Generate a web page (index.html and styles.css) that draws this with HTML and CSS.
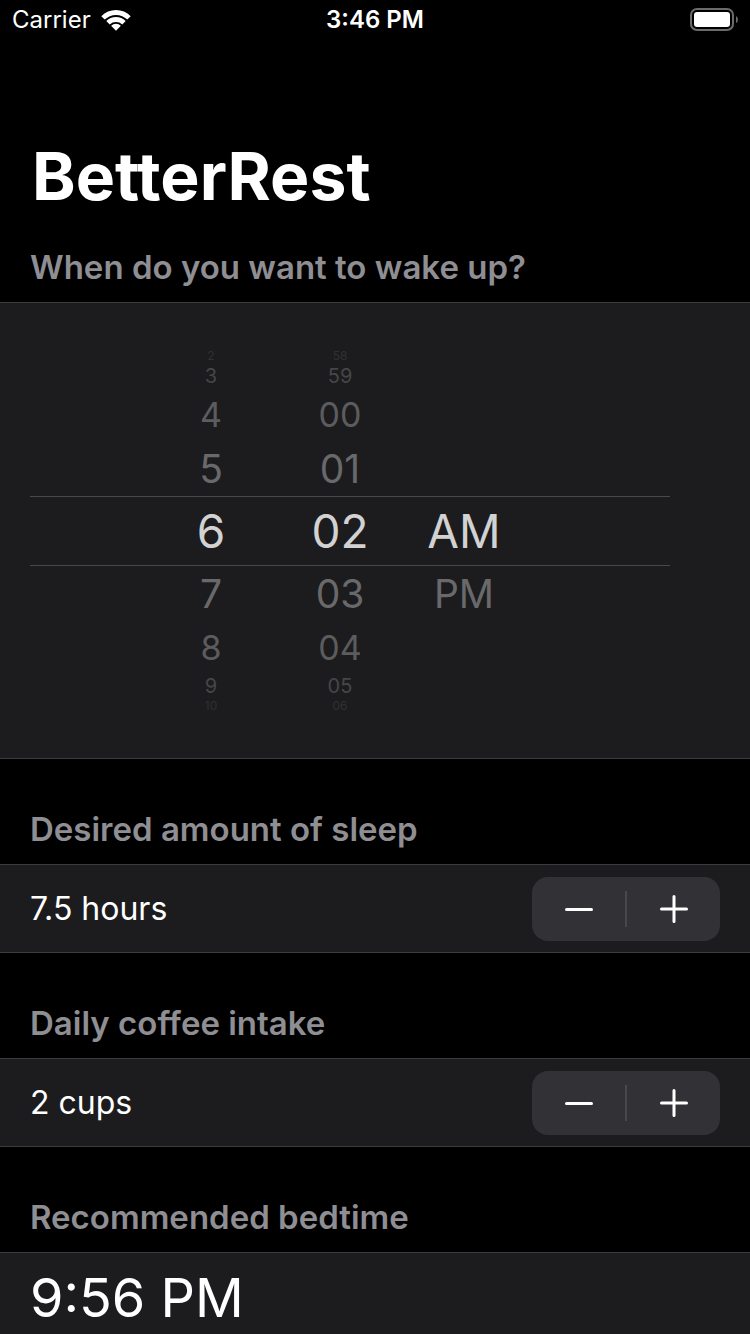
FILE: index.html
```html
<!DOCTYPE html>
<html lang="en">
<head>
<meta charset="utf-8">
<meta name="viewport" content="width=device-width, initial-scale=1">
<title>BetterRest</title>
<link rel="stylesheet" href="styles.css">
</head>
<body>
<div class="app">
  <header class="status">
    <div class="status-left">
      <span>Carrier</span>
      <svg class="wifi" viewBox="0 0 30 22" aria-hidden="true">
        <path d="M0.3 7.2 A20.4 20.4 0 0 1 29.7 7.2 L26.3 10.600 A16 16 0 0 0 3.7 10.600 Z"/>
        <path d="M5.3 12 A13.7 13.7 0 0 1 24.7 12 L21.3 15.4 A9.2 9.2 0 0 0 8.7 15.4 Z"/>
        <path d="M10.1 16.8 A7 7 0 0 1 19.9 16.8 L15 21.8 Z"/>
      </svg>
    </div>
    <span class="status-time">3:46 PM</span>
    <div class="status-right">
      <svg class="battery" viewBox="0 0 48 24" aria-hidden="true">
        <rect class="battery-shell" x="1" y="1" width="42" height="21" rx="6"/>
        <rect class="battery-fill" x="4" y="4" width="36" height="15" rx="3"/>
        <path class="battery-cap" d="M46 8 Q48 9 48 11.500 Q48 14 46 15 Z"/>
      </svg>
    </div>
  </header>

  <main class="content">
    <h1 class="title">BetterRest</h1>

    <section>
      <h2 class="heading heading-first">When do you want to wake up?</h2>
      <div class="card picker">
        <div class="wheel" role="group" aria-label="Wake up time">
          <div class="wheel-row edge"><span class="hour">2</span><span class="minute">58</span></div>
          <div class="wheel-row far"><span class="hour">3</span><span class="minute">59</span></div>
          <div class="wheel-row mid"><span class="hour">4</span><span class="minute">00</span></div>
          <div class="wheel-row near"><span class="hour">5</span><span class="minute">01</span></div>
          <div class="wheel-row selected"><span class="hour">6</span><span class="minute">02</span><span class="period">AM</span></div>
          <div class="wheel-row near"><span class="hour">7</span><span class="minute">03</span><span class="period">PM</span></div>
          <div class="wheel-row mid"><span class="hour">8</span><span class="minute">04</span></div>
          <div class="wheel-row far"><span class="hour">9</span><span class="minute">05</span></div>
          <div class="wheel-row edge"><span class="hour">10</span><span class="minute">06</span></div>
        </div>
      </div>
    </section>

    <section>
      <h2 class="heading">Desired amount of sleep</h2>
      <div class="card row">
        <span class="value">7.5 hours</span>
        <div class="stepper" role="group" aria-label="Desired amount of sleep">
          <button type="button" aria-label="Less sleep"><svg class="sign" viewBox="0 0 28 28"><path d="M1.500 14.500H26.500"/></svg></button>
          <span class="divider"></span>
          <button type="button" aria-label="More sleep"><svg class="sign" viewBox="0 0 28 28"><path d="M1.500 14H26.500M14 1.500V26.500"/></svg></button>
        </div>
      </div>
    </section>

    <section>
      <h2 class="heading">Daily coffee intake</h2>
      <div class="card row">
        <span class="value">2 cups</span>
        <div class="stepper" role="group" aria-label="Daily coffee intake">
          <button type="button" aria-label="Less coffee"><svg class="sign" viewBox="0 0 28 28"><path d="M1.500 14.500H26.500"/></svg></button>
          <span class="divider"></span>
          <button type="button" aria-label="More coffee"><svg class="sign" viewBox="0 0 28 28"><path d="M1.500 14H26.500M14 1.500V26.500"/></svg></button>
        </div>
      </div>
    </section>

    <section>
      <h2 class="heading">Recommended bedtime</h2>
      <div class="card row">
        <span class="bedtime">9:56 PM</span>
      </div>
    </section>
  </main>
</div>
</body>
</html>
```

FILE: styles.css
```css
* {
  box-sizing: border-box;
}

body {
  margin: 0;
  background: #000;
  color: #fff;
  font-family: Inter, "Liberation Sans", sans-serif;
}

.app {
  display: flex;
  flex-direction: column;
  height: 100vh;
}

.status {
  display: grid;
  grid-template-columns: 1fr auto 1fr;
  align-items: center;
  flex: none;
  height: 40px;
  padding: 0 12px;
  font-size: 24px;
  line-height: 40px;
}

.status-left {
  display: flex;
  align-items: center;
  gap: 10px;
}

.wifi {
  width: 30px;
  height: 22px;
  fill: #fff;
}

.status-time {
  font-weight: 600;
}

.status-right {
  display: flex;
  justify-content: flex-end;
}

.battery {
  width: 48px;
  height: 24px;
}

.battery-shell {
  fill: none;
  stroke: #6b6b6b;
  stroke-width: 2;
}

.battery-fill {
  fill: #fff;
}

.battery-cap {
  fill: #6b6b6b;
}

.content {
  flex: 1;
  min-height: 0;
  overflow-y: auto;
  scrollbar-width: none;
}

.title {
  margin: 96px 32px 0;
  font-size: 66px;
  font-weight: 700;
  line-height: 80px;
}

.heading {
  margin: 0;
  padding: 49px 30px 14px;
  color: #8e8e93;
  font-size: 33px;
  font-weight: 600;
  line-height: 42px;
}

.heading-first {
  padding-top: 30px;
}

.card {
  border: solid #3c3c3f;
  border-width: 1px 0;
  background: #1c1c1e;
}

.picker {
  padding: 45px 80px 44px 30px;
}

.wheel {
  display: flex;
  flex-direction: column;
}

.wheel-row {
  display: grid;
  grid-template-columns: 80px 100px 100px;
  gap: 24px;
  justify-content: center;
  align-items: center;
  text-align: center;
}

.hour {
  padding-right: 30px;
}

.selected {
  height: 70px;
  border: solid #48484a;
  border-width: 1px 0;
  color: #d2d2d3;
  font-size: 46px;
}

.near {
  height: 55px;
  color: #69696b;
  font-size: 39px;
}

.mid {
  height: 53px;
  color: #5c5c5e;
  font-size: 34px;
}

.far {
  height: 24px;
  color: #464648;
  font-size: 20px;
  line-height: 24px;
}

.edge {
  height: 16px;
  color: #303032;
  font-size: 12px;
  line-height: 16px;
}

.row {
  display: flex;
  align-items: center;
  justify-content: space-between;
  min-height: 89px;
  padding: 11px 30px;
}

.value {
  font-size: 32px;
  line-height: 40px;
}

.bedtime {
  font-size: 54px;
  line-height: 68px;
}

.stepper {
  display: flex;
  align-items: center;
  height: 64px;
  border-radius: 16px;
  background: #323236;
}

.stepper button {
  display: flex;
  align-items: center;
  justify-content: center;
  width: 93px;
  height: 64px;
  padding: 0;
  border: 0;
  background: none;
}

.divider {
  width: 2px;
  height: 36px;
  background: #48484c;
}

.sign {
  width: 28px;
  height: 28px;
  fill: none;
  stroke: #fff;
  stroke-width: 3;
  stroke-linecap: round;
}
```
